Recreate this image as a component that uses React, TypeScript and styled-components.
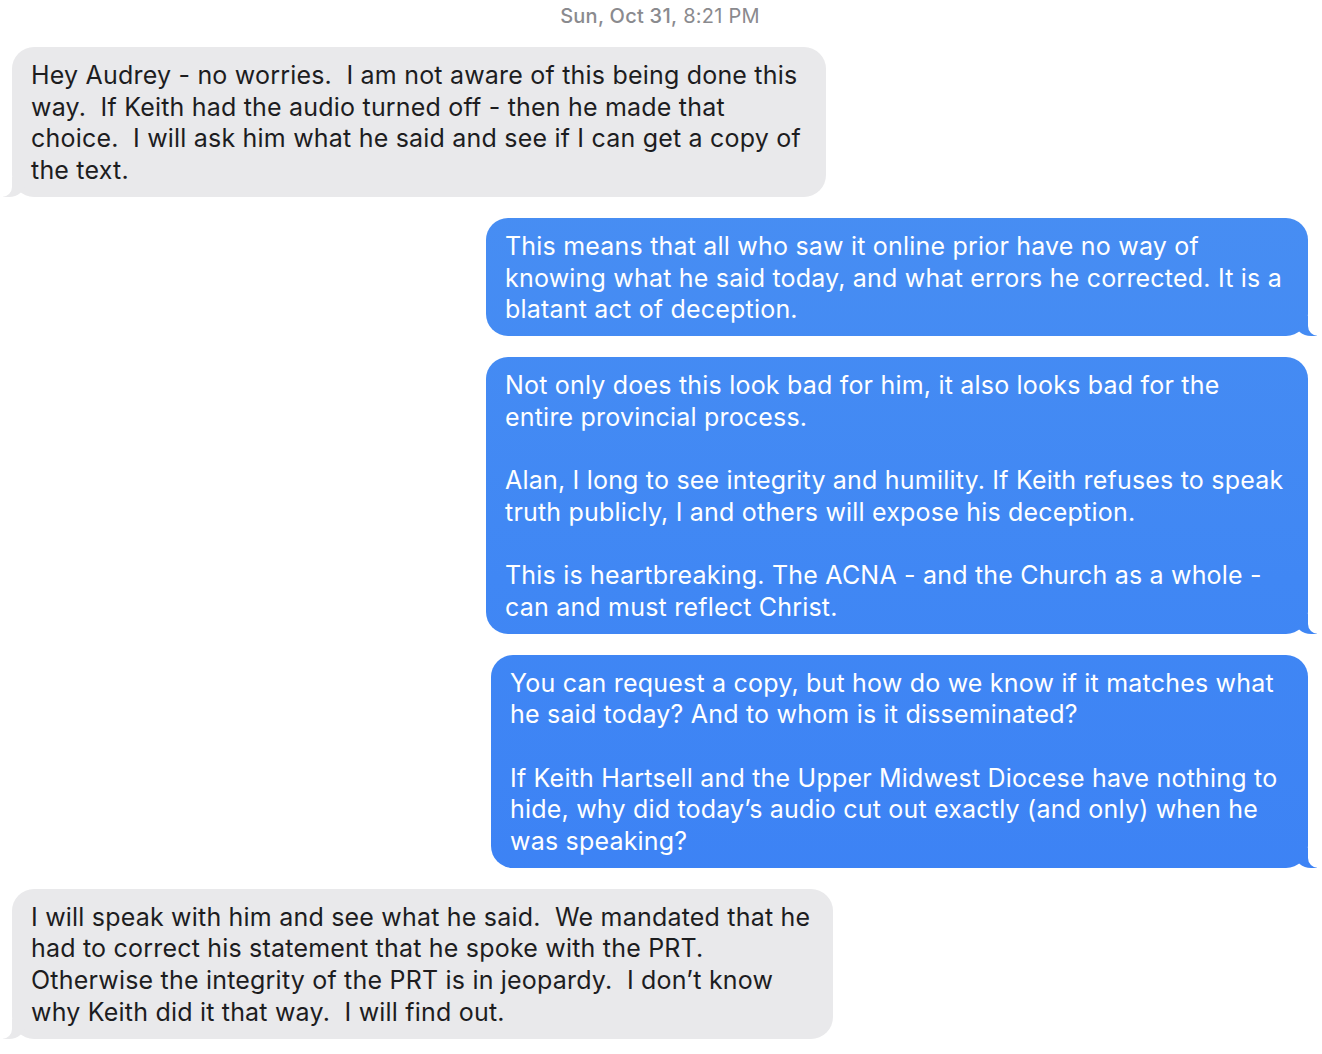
import styled, { createGlobalStyle } from "styled-components";

const GlobalStyle = createGlobalStyle`
  html, body {
    margin: 0;
    padding: 0;
    background: #ffffff;
  }
  body {
    font-family: "Inter", "Noto Sans", "Liberation Sans", sans-serif;
    -webkit-font-smoothing: antialiased;
  }
`;

interface Message {
  fromMe: boolean;
  width: number;
  lines: string[];
}

const messages: Message[] = [
  {
    fromMe: false,
    width: 814,
    lines: [
      "Hey Audrey - no worries.  I am not aware of this being done this",
      "way.  If Keith had the audio turned off - then he made that",
      "choice.  I will ask him what he said and see if I can get a copy of",
      "the text.",
    ],
  },
  {
    fromMe: true,
    width: 822,
    lines: [
      "This means that all who saw it online prior have no way of",
      "knowing what he said today, and what errors he corrected. It is a",
      "blatant act of deception.",
    ],
  },
  {
    fromMe: true,
    width: 822,
    lines: [
      "Not only does this look bad for him, it also looks bad for the",
      "entire provincial process.",
      "",
      "Alan, I long to see integrity and humility. If Keith refuses to speak",
      "truth publicly, I and others will expose his deception.",
      "",
      "This is heartbreaking. The ACNA - and the Church as a whole -",
      "can and must reflect Christ.",
    ],
  },
  {
    fromMe: true,
    width: 817,
    lines: [
      "You can request a copy, but how do we know if it matches what",
      "he said today? And to whom is it disseminated?",
      "",
      "If Keith Hartsell and the Upper Midwest Diocese have nothing to",
      "hide, why did today\u2019s audio cut out exactly (and only) when he",
      "was speaking?",
    ],
  },
  {
    fromMe: false,
    width: 821,
    lines: [
      "I will speak with him and see what he said.  We mandated that he",
      "had to correct his statement that he spoke with the PRT.",
      "Otherwise the integrity of the PRT is in jeopardy.  I don\u2019t know",
      "why Keith did it that way.  I will find out.",
    ],
  },
];

const BLUE = "linear-gradient(180deg, #4b91f2 0%, #4087f4 55%, #3b80f5 100%) fixed";
const GRAY = "#e9e9eb";

export default function App() {
  return (
    <>
      <GlobalStyle />
      <Thread>
        <Timestamp>
          <b>Sun, Oct 31,</b> 8:21 PM
        </Timestamp>
        {messages.map((m, i) => (
          <Row key={i} $fromMe={m.fromMe}>
            <Bubble $fromMe={m.fromMe} $width={m.width}>
              {m.lines.join("\n")}
            </Bubble>
          </Row>
        ))}
      </Thread>
    </>
  );
}

const Thread = styled.div`
  display: flex;
  flex-direction: column;
  gap: 21px;
  padding: 4px 14px 16px 12px;
  width: 1322px;
  box-sizing: border-box;
`;

const Timestamp = styled.div`
  text-align: center;
  font-size: 20px;
  letter-spacing: 0.25px;
  line-height: 24px;
  color: #8a8a8e;
  margin-bottom: -2px;

  b {
    font-weight: 500;
  }
`;

const Row = styled.div<{ $fromMe: boolean }>`
  display: flex;
  justify-content: ${({ $fromMe }) => ($fromMe ? "flex-end" : "flex-start")};
`;

const Bubble = styled.div<{ $fromMe: boolean; $width: number }>`
  position: relative;
  box-sizing: border-box;
  width: ${({ $width }) => $width}px;
  padding: 13px 10px 10px 19px;
  border-radius: 22px;
  font-size: 25px;
  letter-spacing: 0.2px;
  line-height: 31.7px;
  white-space: pre-wrap;
  color: ${({ $fromMe }) => ($fromMe ? "#ffffff" : "#1d1d1f")};
  background: ${({ $fromMe }) => ($fromMe ? BLUE : GRAY)};

  &::before {
    content: "";
    position: absolute;
    bottom: 0;
    width: 22px;
    height: 20px;
    background: ${({ $fromMe }) => ($fromMe ? BLUE : GRAY)};
    ${({ $fromMe }) =>
      $fromMe
        ? "right: -9px; border-bottom-left-radius: 16px 14px;"
        : "left: -9px; border-bottom-right-radius: 16px 14px;"}
  }

  &::after {
    content: "";
    position: absolute;
    bottom: 0;
    width: 26px;
    height: 20px;
    background: #ffffff;
    ${({ $fromMe }) =>
      $fromMe
        ? "right: -26px; border-bottom-left-radius: 10px;"
        : "left: -26px; border-bottom-right-radius: 10px;"}
  }
`;
